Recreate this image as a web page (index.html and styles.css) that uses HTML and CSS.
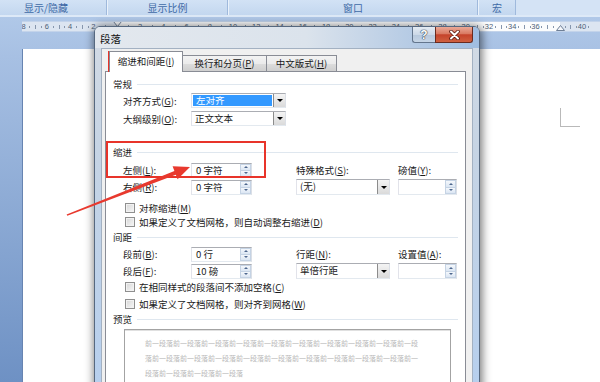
FILE: index.html
```html
<!DOCTYPE html>
<html lang="zh-CN">
<head>
    <meta charset="UTF-8">
    <meta name="viewport" content="width=device-width, initial-scale=1.0">
    <title>段落</title>
    <link rel="stylesheet" href="styles.css">
</head>
<body>
    <div class="ribbon">
        <div class="group g1">显示/隐藏</div>
        <div class="group g2">显示比例</div>
        <div class="group g3">窗口</div>
        <div class="group g4">宏</div>
    </div>

    <div class="workspace">
        <div class="ruler">
            <div class="scale">
                <span>8</span><span>6</span><span>4</span><span>2</span><span></span>
                <span>2</span><span>4</span><span>6</span><span>8</span><span>10</span>
                <span>12</span><span>14</span><span>16</span><span>18</span><span>20</span>
                <span>22</span><span>24</span><span>26</span><span>28</span><span>30</span>
                <span>32</span><span>34</span><span>36</span><span></span><span>40</span>
            </div>
            <svg class="marker marker-left" width="9" height="6" viewBox="0 0 9 6"><path d="M0.5 0.5 H8.5 L4.5 5.5 Z" fill="#f4f6fa" stroke="#6f7f96"/></svg>
            <svg class="marker marker-right" width="9" height="6" viewBox="0 0 9 6"><path d="M0.5 5.5 H8.5 L4.5 0.5 Z" fill="#f4f6fa" stroke="#6f7f96"/></svg>
        </div>
        <div class="page">
            <div class="corner"></div>
        </div>
    </div>

    <div class="dialog">
        <div class="titlebar">
            <span class="title">段落</span>
            <div class="caption-btns">
                <span class="cap help">?</span>
                <span class="cap close">
                    <svg width="11" height="10" viewBox="0 0 11 10">
                        <path d="M2 1.5 L9 8.5 M9 1.5 L2 8.5" stroke="#5a1a10" stroke-width="3.6" stroke-linecap="round"/>
                        <path d="M2 1.5 L9 8.5 M9 1.5 L2 8.5" stroke="#fff" stroke-width="2" stroke-linecap="round"/>
                    </svg>
                </span>
            </div>
        </div>

        <div class="client">
            <div class="tabs">
                <span class="tab active">缩进和间距(<u>I</u>)</span>
                <span class="tab t2">换行和分页(<u>P</u>)</span>
                <span class="tab t3">中文版式(<u>H</u>)</span>
            </div>

            <div class="panel">
                <div class="hd hd-general">常规</div>
                <div class="row r1">
                    <span class="lbl">对齐方式(<u>G</u>):</span>
                    <div class="combo"><span class="val sel">左对齐</span><span class="drop"></span></div>
                </div>
                <div class="row r2">
                    <span class="lbl">大纲级别(<u>O</u>):</span>
                    <div class="combo"><span class="val">正文文本</span><span class="drop"></span></div>
                </div>

                <div class="hd hd-indent">缩进</div>
                <div class="grid">
                    <span class="lbl">左侧(<u>L</u>):</span>
                    <div class="spin"><span class="val">0 字符</span><span class="arrows"><i class="up"></i><i class="down"></i></span></div>
                    <span></span>
                    <span class="lbl">特殊格式(<u>S</u>):</span>
                    <span></span>
                    <span class="lbl">磅值(<u>Y</u>):</span>

                    <span class="lbl">右侧(<u>R</u>):</span>
                    <div class="spin"><span class="val">0 字符</span><span class="arrows"><i class="up"></i><i class="down"></i></span></div>
                    <span></span>
                    <div class="combo tall"><span class="val">(无)</span><span class="drop"></span></div>
                    <span></span>
                    <div class="spin tall"><span class="val"></span><span class="arrows"><i class="up"></i><i class="down"></i></span></div>
                </div>
                <div class="check c1"><span class="box"></span>对称缩进(<u>M</u>)</div>
                <div class="check"><span class="box"></span>如果定义了文档网格，则自动调整右缩进(<u>D</u>)</div>

                <div class="hd hd-spacing">间距</div>
                <div class="grid grid-spacing">
                    <span class="lbl">段前(<u>B</u>):</span>
                    <div class="spin"><span class="val">0 行</span><span class="arrows"><i class="up"></i><i class="down"></i></span></div>
                    <span></span>
                    <span class="lbl">行距(<u>N</u>):</span>
                    <span></span>
                    <span class="lbl">设置值(<u>A</u>):</span>

                    <span class="lbl">段后(<u>F</u>):</span>
                    <div class="spin"><span class="val">10 磅</span><span class="arrows"><i class="up"></i><i class="down"></i></span></div>
                    <span></span>
                    <div class="combo tall"><span class="val">单倍行距</span><span class="drop"></span></div>
                    <span></span>
                    <div class="spin tall"><span class="val"></span><span class="arrows"><i class="up"></i><i class="down"></i></span></div>
                </div>
                <div class="check c3"><span class="box"></span>在相同样式的段落间不添加空格(<u>C</u>)</div>
                <div class="check c4"><span class="box"></span>如果定义了文档网格，则对齐到网格(<u>W</u>)</div>

                <div class="hd hd-preview">预览</div>
                <div class="preview">
                    <div>前一段落前一段落前一段落前一段落前一段落前一段落前一段落前一段落前一段落前一段</div>
                    <div>落前一段落前一段落前一段落前一段落前一段落前一段落前一段落前一段落前一段落前一</div>
                    <div>段落前一段落前一段落前一段落</div>
                </div>
            </div>
        </div>
    </div>

    <!-- annotations drawn over the screenshot -->
    <div class="mark mark-tab"></div>
    <div class="mark mark-indent"></div>
    <svg class="arrow" width="600" height="382" viewBox="0 0 600 382">
        <polygon points="66.6,214.4 174.4,170.9 172.6,166.3 190,167 177.6,179.3 175.8,174.7 67.3,215.7" fill="#e8392e"/>
    </svg>
</body>
</html>
```

FILE: styles.css
```css
* {
    box-sizing: border-box;
}

body {
    margin: 0;
    width: 600px;
    height: 382px;
    overflow: hidden;
    position: relative;
    font-family: "Noto Sans CJK SC", "Noto Sans", sans-serif;
    font-size: 9.5px;
    color: #1a1a1a;
    background: #a9c2e5;
}

u {
    text-decoration-thickness: 1px;
    text-underline-offset: 1px;
}

/* ribbon group captions */
.ribbon {
    display: flex;
    height: 17px;
    border-bottom: 2px solid #dde9f7;
    background: #d4e3f5;
}

.group {
    height: 15px;
    line-height: 15px;
    text-align: center;
    font-size: 10px;
    color: #3f6aa6;
    background: linear-gradient(#d2e2f5, #c3d7ef);
    border-left: 1px solid #eaf2fb;
    border-right: 1px solid #9fb9dc;
}

.g1 { width: 107px; padding-right: 14px; border-left: none; }
.g2 { width: 121px; }
.g3 { width: 250px; }
.g4 { width: 38px; }

/* document area */
.workspace {
    display: flex;
    flex-direction: column;
    height: 365px;
    background: linear-gradient(#b0c8e8 0, #a7c0e3 40px, #6e91c4 100%);
}

.ruler {
    position: relative;
    margin: 4px 0 0 22px;
    height: 11px;
    overflow: hidden;
    background: linear-gradient(to right, #dce5f1 0, #dce5f1 95px, #fbfcfd 95px, #fbfcfd 538px, #dce5f1 538px);
    border-top: 1px solid #c3d3ea;
    border-bottom: 1px solid #c3d3ea;
}

.scale {
    display: flex;
    margin-left: -10px;
}

.scale span {
    flex: 0 0 23.28px;
    height: 9px;
    line-height: 9px;
    text-align: center;
    font-family: "Liberation Sans", Arial, sans-serif;
    font-size: 7.5px;
    color: #4e5f78;
    background:
        linear-gradient(#8696ad, #8696ad) 0 3px / 1px 4px no-repeat,
        linear-gradient(#8696ad, #8696ad) 5.8px 4px / 1px 2px no-repeat,
        linear-gradient(#8696ad, #8696ad) 17.4px 4px / 1px 2px no-repeat;
}

.marker {
    position: absolute;
}

.marker-left {
    left: 91px;
    top: -1px;
}

.marker-right {
    left: 534px;
    bottom: 0;
}

.page {
    flex: 1;
    margin: 17px 0 0 22px;
    background: #fff;
    border-left: 1px solid #6784b1;
}

.corner {
    margin: 59px 0 0 537px;
    width: 20px;
    height: 19px;
    border-left: 1px solid #b9b9b9;
    border-bottom: 1px solid #b9b9b9;
}

/* dialog window */
.dialog {
    position: absolute;
    left: 94px;
    top: 26px;
    width: 386px;
    height: 372px;
    display: flex;
    flex-direction: column;
    padding: 0 6px;
    border: 1px solid #56687f;
    border-radius: 6px 6px 0 0;
    background: linear-gradient(#d3dbe5 0, #c6d4e4 120px, #b6cfee 100%);
    box-shadow: 1px 1px 10px 1px rgba(0, 0, 0, 0.55);
}

.titlebar {
    display: flex;
    align-items: flex-start;
    height: 21px;
    margin: 0 -6px;
    padding-left: 5px;
    border-radius: 5px 5px 0 0;
    background: linear-gradient(to right, #e3e8ee 0%, #dbe3ec 55%, #b9cde5 80%, #9fbde1 100%);
}

.title {
    line-height: 23px;
    font-size: 10.5px;
    color: #111;
}

.caption-btns {
    display: flex;
    margin: 0 6px 0 auto;
}

.cap {
    display: flex;
    align-items: center;
    justify-content: center;
    height: 16px;
    border: 1px solid #64768d;
    border-top: none;
}

.help {
    width: 23px;
    border-right: none;
    border-radius: 0 0 0 3px;
    background: linear-gradient(#e4ebf3 0, #cdd9e7 50%, #b7c8dc 51%, #c6d5e6 100%);
    font-family: "Liberation Sans", Arial, sans-serif;
    font-weight: bold;
    font-size: 12px;
    color: #fff;
    text-shadow: 0 0 1px #2c3a4c, 0 0 1px #2c3a4c, 0 0 1px #2c3a4c;
}

.close {
    width: 38px;
    border-color: #6a2b1f;
    border-radius: 0 0 3px 0;
    background: linear-gradient(#eaa997 0, #d97a62 45%, #c5432b 52%, #d0603f 100%);
}

.client {
    flex: 1;
    display: flex;
    flex-direction: column;
    padding: 3px 6px 0 3px;
    background: #f0f0f0;
    border: 1px solid #a3b1c2;
    border-bottom: none;
}

/* tabs */
.tabs {
    display: flex;
    align-items: flex-end;
    height: 19px;
    padding-left: 4px;
}

.tab {
    height: 16px;
    line-height: 15px;
    text-align: center;
    border: 1px solid #898c95;
    border-bottom: none;
    background: linear-gradient(#f3f3f3 0, #ebebeb 50%, #dddddd 51%, #cfcfcf 100%);
    margin-left: -1px;
}

.tab.active {
    position: relative;
    z-index: 1;
    width: 74px;
    height: 21px;
    margin: 0 0 -1px 0;
    padding-top: 2px;
    background: #fff;
}

.t2 { width: 85px; }
.t3 { width: 71px; }

.panel {
    flex: 1;
    padding: 5px 7px 0 7px;
    border: 1px solid #898c95;
    background: #fff;
}

/* group headings with rule */
.hd {
    display: flex;
    align-items: center;
    height: 14px;
    color: #1e1e1e;
}

.hd::after {
    content: "";
    flex: 1;
    height: 1px;
    margin-left: 5px;
    background: #dfe7ef;
}

.hd-indent { margin-top: 19px; }
.hd-spacing { margin-top: 1px; }
.hd-preview { margin-top: 1px; }

.row {
    display: flex;
    align-items: center;
    height: 15px;
    padding-left: 10px;
}

.r1 { margin-top: 2px; }
.r2 { margin-top: 3px; }

.lbl {
    width: 68px;
    white-space: nowrap;
}

.grid {
    display: grid;
    grid-template-columns: 68px 61px 44px 94px 8px 59px;
    grid-template-rows: 16px 16px;
    row-gap: 1px;
    align-items: center;
    margin-top: 3px;
    padding-left: 10px;
}

.grid-spacing {
    margin-top: 2px;
}

/* combo box */
.combo {
    display: flex;
    width: 95px;
    height: 15px;
    background: #fff;
    border: 1px solid #abadb3;
    border-color: #abadb3 #dbdfe6 #e3e9ef #e2e3ea;
}

.combo.tall {
    width: 94px;
    height: 16px;
}

.combo .val {
    flex: 1;
    padding-left: 3px;
    line-height: 13px;
    white-space: nowrap;
}

.combo .val.sel {
    margin: 1px 1px 1px 1px;
    line-height: 11px;
    background: #3399ff;
    color: #fff;
}

.combo .drop {
    display: flex;
    align-items: center;
    justify-content: center;
    width: 12px;
    border-left: 1px solid #8c8c8c;
    background: linear-gradient(#f4f4f4, #dadada);
}

.combo .drop::after {
    content: "";
    border-left: 3px solid transparent;
    border-right: 3px solid transparent;
    border-top: 3px solid #000;
}

/* spin box */
.spin {
    display: flex;
    height: 15px;
    background: #fff;
    border: 1px solid #abadb3;
    border-color: #abadb3 #dbdfe6 #e3e9ef #e2e3ea;
}

.spin.tall {
    height: 16px;
}

.spin .val {
    flex: 1;
    padding-left: 4px;
    line-height: 13px;
    white-space: pre;
}

.spin .arrows {
    display: flex;
    flex-direction: column;
    width: 11px;
    margin: 0 0 0 auto;
}

.spin .arrows i {
    flex: 1;
    display: flex;
    align-items: center;
    justify-content: center;
    background: linear-gradient(#f5f8fc, #dbe6f3);
    border: 1px solid #c5d3e4;
}

.spin .arrows i + i {
    border-top: none;
}

.spin .up::after {
    content: "";
    border-left: 2px solid transparent;
    border-right: 2px solid transparent;
    border-bottom: 2px solid #4d678e;
}

.spin .down::after {
    content: "";
    border-left: 2px solid transparent;
    border-right: 2px solid transparent;
    border-top: 2px solid #4d678e;
}

/* check boxes */
.check {
    display: flex;
    align-items: center;
    height: 14px;
    padding-left: 12px;
    white-space: nowrap;
}

.check .box {
    width: 10px;
    height: 10px;
    margin-right: 4px;
    border: 1px solid #8f8f8f;
    background: linear-gradient(135deg, #d6d6d6, #f7f7f7);
    box-shadow: inset 0 0 0 1px #f2f2f2;
}

.c1 { margin-top: 6px; }
.c3 { margin-top: 1px; }
.c4 { margin-top: 3px; }

/* preview box */
.preview {
    height: 70px;
    margin: 3px 7px 0 11px;
    padding: 6px 0 0 20px;
    border: 1px solid #a3a3a3;
    box-shadow: inset 0 1px 0 #e0e0e0;
    font-size: 7px;
    line-height: 15px;
    color: #b8b8b8;
    white-space: nowrap;
}

/* red annotations */
.mark {
    position: absolute;
    border: 2px solid #e8342a;
}

.mark-tab {
    left: 108px;
    top: 51px;
    width: 74px;
    height: 21px;
}

.mark-indent {
    left: 106px;
    top: 141px;
    width: 160px;
    height: 37px;
}

.arrow {
    position: absolute;
    left: 0;
    top: 0;
}
```
